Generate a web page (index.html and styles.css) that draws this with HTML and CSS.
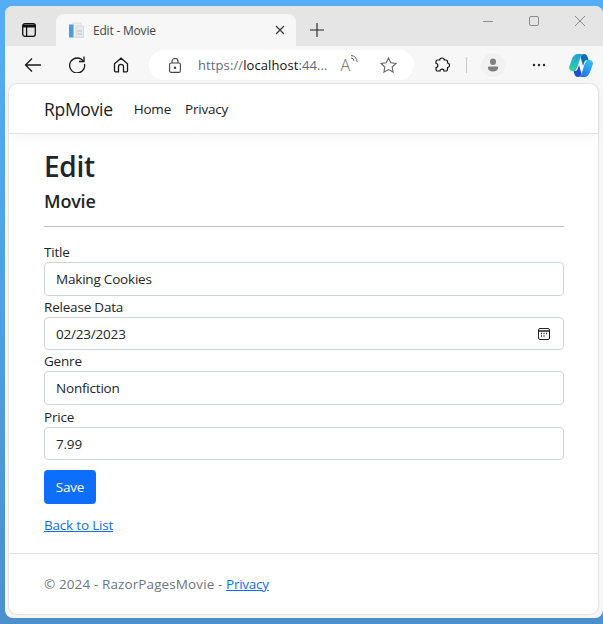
FILE: index.html
```html
<!DOCTYPE html>
<html lang="en">
<head>
  <meta charset="UTF-8" />
  <title>Edit - Movie</title>
  <link rel="stylesheet" href="styles.css">
</head>
<body>
  <div class="window">
    <div class="tabbar">
      <button class="tab-actions" aria-label="Tab actions">
        <svg width="14" height="14" viewBox="0 0 14 14" fill="none" stroke="#111" stroke-width="1.3"><rect x="0.700" y="0.700" width="12.600" height="12.600" rx="2.200"/><path d="M0.700 3h12.600" stroke-width="3"/><path d="M4.600 3v10.300"/></svg>
      </button>
      <div class="tab">
        <svg class="favicon" width="16" height="16" viewBox="0 0 16 16"><rect x="5" y="1" width="8" height="14" fill="#eef1f4" stroke="#d5dbe0" stroke-width="0.800"/><rect x="8" y="4" width="7.500" height="11.500" fill="#e6eaee" stroke="#cfd6dc" stroke-width="0.800"/><rect x="1" y="2.500" width="4.500" height="13" fill="#4f9bdc"/><path d="M9.500 9h4.500M9.500 12h4.500" stroke="#b4bec8"/></svg>
        <span class="tab-title">Edit - Movie</span>
        <svg class="tab-close" width="10" height="10" viewBox="0 0 10 10" stroke="#333" stroke-width="1.100"><path d="M1 1l8 8M9 1l-8 8"/></svg>
      </div>
      <svg class="new-tab" width="16" height="16" viewBox="0 0 16 16" stroke="#222" stroke-width="1.100"><path d="M8 1v14M1 8h14"/></svg>
      <div class="win-controls">
        <svg width="12" height="12" viewBox="0 0 12 12" stroke="#8a8a8a"><path d="M1 6.500h10"/></svg>
        <svg width="12" height="12" viewBox="0 0 12 12" fill="none" stroke="#8a8a8a"><rect x="1.500" y="1.500" width="9" height="9" rx="1.500"/></svg>
        <svg width="12" height="12" viewBox="0 0 12 12" stroke="#8a8a8a"><path d="M1 1l10 10M11 1L1 11"/></svg>
      </div>
    </div>

    <div class="toolbar">
      <svg class="tool back" width="18" height="16" viewBox="0 0 18 16" fill="none" stroke="#1a1a1a" stroke-width="1.300"><path d="M17 8H1.500M8 1.500L1.500 8 8 14.500"/></svg>
      <svg class="tool reload" width="18" height="18" viewBox="0 0 18 18" fill="none" stroke="#1a1a1a" stroke-width="1.300"><path d="M15.500 6.500A7.500 7.500 0 1 0 16.500 9"/><path d="M16 1.500v5h-5"/></svg>
      <svg class="tool home" width="16" height="16" viewBox="0 0 16 16" fill="none" stroke="#1a1a1a" stroke-width="1.300"><path d="M1.500 6.800L8 1.200l6.500 5.600v7a1 1 0 0 1-1 1h-3v-5a2.500 2.500 0 0 0-5 0v5h-3a1 1 0 0 1-1-1z"/></svg>
      <div class="address">
        <svg class="lock" width="12" height="15" viewBox="0 0 12 15" fill="none" stroke="#444" stroke-width="1.100"><rect x="0.600" y="5" width="10.800" height="9.400" rx="1.500"/><path d="M3 5V3.500a3 3 0 0 1 6 0V5"/><circle cx="6" cy="9.700" r="0.700" fill="#444"/></svg>
        <span class="url"><span class="url-dim">https://</span>localhost<span class="url-dim">:44...</span></span>
        <span class="read-aloud">A<svg width="9" height="10" viewBox="0 0 9 10" fill="none" stroke="#666"><path d="M1 4a3 3 0 0 1 3 3M1 1.500A6 6 0 0 1 7 8"/></svg></span>
        <svg class="star" width="17" height="16" viewBox="0 0 17 16" fill="none" stroke="#666" stroke-width="1.100"><path d="M8.500 1l2.300 4.700 5.200.7-3.800 3.600.9 5.100-4.600-2.500-4.600 2.500.9-5.100L1 6.400l5.200-.7z"/></svg>
      </div>
      <svg class="puzzle" width="16" height="16" viewBox="0 0 16 16" fill="none" stroke="#111" stroke-width="1.200"><path d="M5.700 3C5.700.3 10.300.3 10.300 3H12a1.500 1.500 0 0 1 1.500 1.500V6c2.700 0 2.700 4.500 0 4.500v2A1.500 1.500 0 0 1 12 14h-2c0-2.500-4-2.500-4 0H3.500A1.500 1.500 0 0 1 2 12.500v-2c2.500 0 2.500-4 0-4v-2A1.500 1.500 0 0 1 3.500 3z"/></svg>
      <span class="tool-sep"></span>
      <span class="profile"><svg width="12" height="14" viewBox="0 0 14 15" fill="#808080" preserveAspectRatio="none"><circle cx="7" cy="4" r="3.500"/><path d="M1 10.500A1.500 1.500 0 0 1 2.500 9h9a1.500 1.500 0 0 1 1.500 1.500c0 2.500-2.500 4-6 4s-6-1.500-6-4z"/></svg></span>
      <svg class="more" width="14" height="4" viewBox="0 0 14 4" fill="#222"><circle cx="2" cy="2" r="1.200"/><circle cx="7" cy="2" r="1.200"/><circle cx="12" cy="2" r="1.200"/></svg>
      <svg class="copilot" width="24" height="23" viewBox="0 0 24 23">
        <defs>
          <linearGradient id="cpA" x1="0.500" y1="0" x2="0.300" y2="1"><stop offset="0" stop-color="#1f9fe0"/><stop offset="1" stop-color="#2fd39a"/></linearGradient>
          <linearGradient id="cpB" x1="0.700" y1="0" x2="0.300" y2="1"><stop offset="0" stop-color="#2fc3f0"/><stop offset="1" stop-color="#2470e8"/></linearGradient>
        </defs>
        <path d="M15 0c2 0 3 1 3.600 3l.9 3H18c-1.500 0-2.500 1-3 3l-1 3-2.500-9C12 1 13.500 0 15 0z" fill="#0b6fb8"/>
        <path d="M9 23c-2 0-3-1-3.600-3l-.9-3H6c1.500 0 2.500-1 3-3l1-3 2.500 9c-.5 2-2 3-3.500 3z" fill="#1b4fd0"/>
        <path d="M9 0h6c-2 0-3 1-3.500 3L9 11c-.5 2-1 3-3 6H3.500C1 17-.5 15 .3 12.500L3 5c1-3 3-5 6-5z" fill="url(#cpA)"/>
        <path d="M15 23H9c2 0 3-1 3.500-3l2.500-8c.5-2 1-3 3-6h2.500c2.500 0 4 2 3.200 4.500L21 18c-1 3-3 5-6 5z" fill="url(#cpB)"/>
      </svg>
    </div>

    <div class="page">
      <header class="navbar">
        <a class="brand">RpMovie</a>
        <a class="nav-link">Home</a>
        <a class="nav-link">Privacy</a>
      </header>

      <main class="content">
        <h1>Edit</h1>
        <h4>Movie</h4>
        <hr>
        <form class="edit-form">
          <label class="field-label">Title</label>
          <div class="input">Making Cookies</div>
          <label class="field-label">Release Data</label>
          <div class="input input-date">
            <span>02/23/2023</span>
            <svg width="14" height="14" viewBox="0 0 14 14" fill="none" stroke="#222"><rect x="1.500" y="1.500" width="11" height="11" rx="1.500"/><path d="M1.500 4h11" stroke-width="1.500"/><path d="M4 6.500h1M6.500 6.500h1M9 6.500h1M4 9h1M6.500 9h1" stroke-width="1.300"/></svg>
          </div>
          <label class="field-label">Genre</label>
          <div class="input input-genre">Nonfiction</div>
          <label class="field-label">Price</label>
          <div class="input input-price">7.99</div>
          <button class="btn-save" type="button">Save</button>
        </form>
        <a class="link back-link">Back to List</a>
      </main>

      <footer class="footer">&copy; 2024 - RazorPagesMovie - <a class="link">Privacy</a></footer>
    </div>
  </div>
</body>
</html>
```

FILE: styles.css
```css
* {
  box-sizing: border-box;
}

html, body {
  height: 100%;
}

body {
  margin: 0;
  padding: 6px 0 6px 5px;
  background: linear-gradient(180deg, #55aef5, #4a90cc);
  font-family: "Open Sans", "Noto Sans", sans-serif;
  color: #212529;
  overflow: hidden;
}

.window {
  height: 612px;
  background: #f7f7f7;
  border-radius: 8px;
  padding-bottom: 4px;
  display: flex;
  flex-direction: column;
}

.tabbar {
  height: 40px;
  flex: none;
  background: #e5e5e5;
  border-radius: 8px 8px 0 0;
  display: flex;
  align-items: flex-end;
  position: relative;
}

.tab-actions {
  width: 51px;
  height: 40px;
  padding: 8px 0 0 17px;
  border: 0;
  background: none;
  display: flex;
  align-items: center;
  justify-content: flex-start;
}

.tab {
  width: 240px;
  height: 32px;
  background: #f7f7f7;
  border-radius: 8px 8px 0 0;
  display: flex;
  align-items: center;
  padding: 0 11px 0 12px;
}

.favicon {
  flex: none;
}

.tab-title {
  margin-left: 9px;
  font-size: 12px;
  letter-spacing: -0.2px;
  color: #444;
  flex: 1;
}

.new-tab {
  margin: 0 0 8px 13px;
}

.win-controls {
  position: absolute;
  top: 9px;
  right: 17px;
  display: flex;
  gap: 34px;
}

.toolbar {
  height: 38px;
  flex: none;
  display: flex;
  align-items: center;
  padding-left: 19px;
}

.reload {
  margin-left: 26px;
  margin-bottom: 2px;
}

.home {
  margin-left: 27px;
}

.address {
  width: 265px;
  height: 30px;
  margin-left: 20px;
  padding: 0 17px 0 20px;
  background: #fff;
  border-radius: 15px;
  display: flex;
  align-items: center;
}

.url {
  margin-left: 17px;
  font-size: 13px;
  letter-spacing: 0.1px;
  color: #111;
  flex: 1;
  white-space: nowrap;
}

.url-dim {
  color: #5f6b78;
}

.read-aloud {
  font-size: 16px;
  font-weight: 300;
  color: #666;
  margin-right: 21px;
  display: flex;
  align-items: flex-start;
}

.puzzle {
  margin-left: 20px;
}

.tool-sep {
  width: 1px;
  height: 16px;
  margin-left: 16px;
  background: #c8c8c8;
}

.profile {
  width: 24px;
  height: 24px;
  margin-left: 14px;
  border-radius: 50%;
  background: #f1f1f1;
  display: flex;
  align-items: center;
  justify-content: center;
}

.more {
  margin-left: 27px;
}

.copilot {
  margin-left: 23px;
}

.page {
  flex: 1;
  margin: 0 5px 0 4px;
  background: #fff;
  border-radius: 8px;
  box-shadow: 0 0 2px rgba(0, 0, 0, 0.25);
  display: flex;
  flex-direction: column;
}

.navbar {
  height: 50px;
  padding-left: 35px;
  display: flex;
  align-items: center;
  border-bottom: 1px solid #dee2e6;
  box-shadow: 0 4px 12px rgba(0, 0, 0, 0.04);
}

.brand {
  font-size: 17.5px;
  letter-spacing: -0.3px;
  color: #1c1c1c;
  margin-right: 21px;
}

.nav-link {
  font-size: 13.5px;
  letter-spacing: -0.2px;
  color: #1c1c1c;
  margin-right: 14px;
}

.content {
  flex: 1;
  padding: 0 34px 0 35px;
}

h1 {
  margin: 13px 0 0;
  font-size: 28px;
  line-height: 38px;
  font-weight: 600;
  letter-spacing: -0.3px;
}

h4 {
  margin: 3px 0 0;
  font-size: 18px;
  line-height: 26px;
  font-weight: 600;
  letter-spacing: -0.2px;
}

hr {
  margin: 12px 0 16px;
  border: 0;
  border-top: 1px solid #bfc1c3;
}

.edit-form {
  display: flex;
  flex-direction: column;
}

.field-label {
  margin-bottom: 1px;
  font-size: 13.5px;
  line-height: 18px;
  letter-spacing: -0.2px;
}

.input {
  height: 34px;
  padding: 0 11px;
  margin-bottom: 2px;
  border: 1px solid #ced4da;
  border-radius: 4px;
  font-size: 13.5px;
  letter-spacing: -0.2px;
  display: flex;
  align-items: center;
  background: #fff;
}

.input-date {
  height: 33px;
  justify-content: space-between;
  padding-right: 12px;
}

.input-genre {
  margin-bottom: 3px;
}

.input-price {
  height: 33px;
}

.btn-save {
  width: 52px;
  height: 34px;
  margin-top: 8px;
  border: 0;
  border-radius: 4px;
  background: #0d6efd;
  color: #fff;
  font-family: inherit;
  font-size: 13.5px;
  letter-spacing: -0.2px;
}

.link {
  color: #0d6efd;
  text-decoration: underline;
}

.back-link {
  display: block;
  margin-top: 12px;
  font-size: 13.5px;
  line-height: 18px;
  letter-spacing: -0.2px;
}

.footer {
  height: 61px;
  padding: 21px 0 0 35px;
  border-top: 1px solid #dee2e6;
  font-size: 13.5px;
  line-height: 18px;
  letter-spacing: 0.11px;
  color: #6c757d;
}

.footer .link {
  letter-spacing: -0.25px;
}
```
